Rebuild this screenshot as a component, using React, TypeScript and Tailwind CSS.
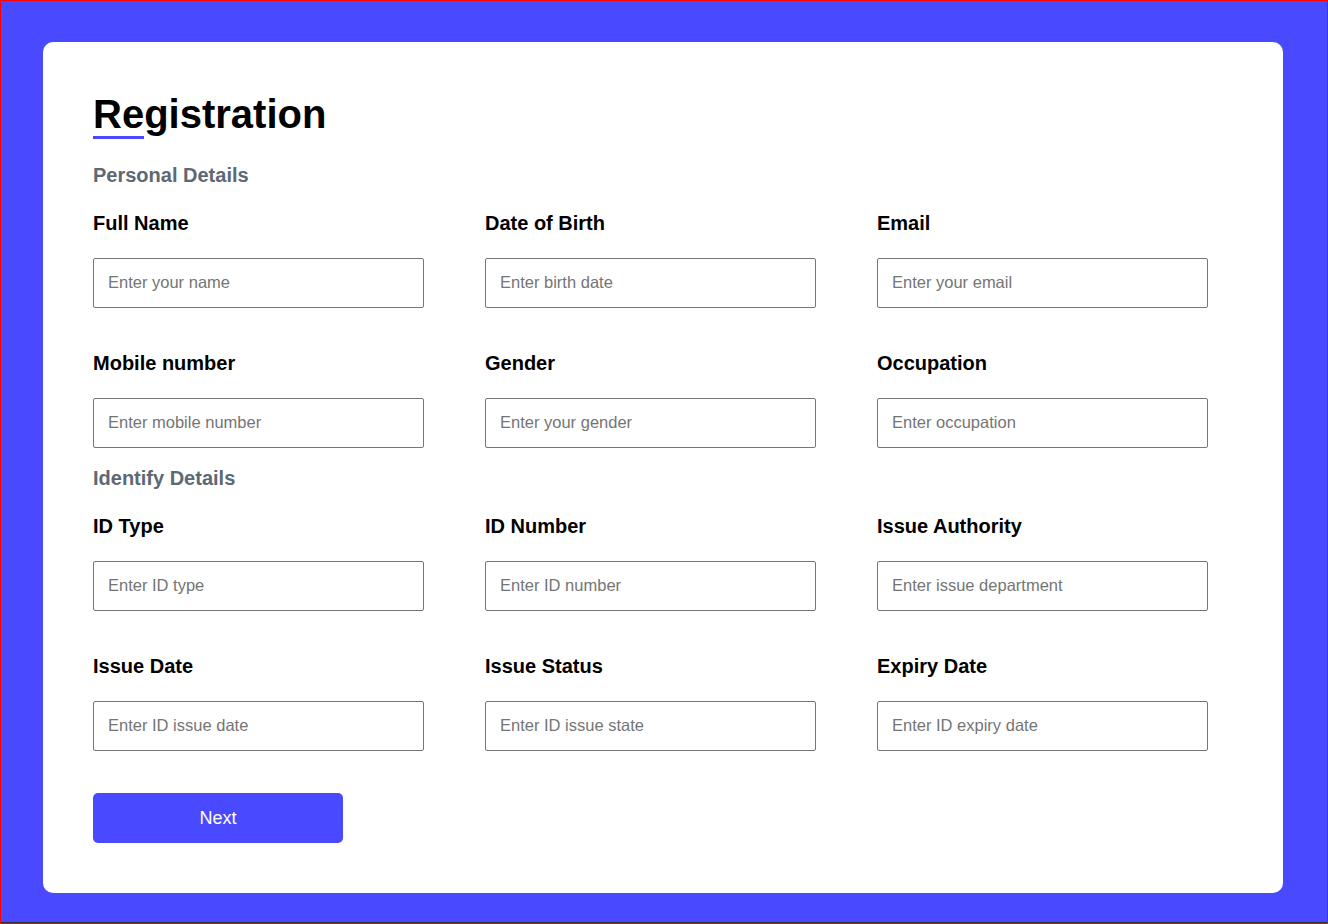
import React from "react";

const personal = [
  { label: "Full Name", ph: "Enter your name" },
  { label: "Date of Birth", ph: "Enter birth date" },
  { label: "Email", ph: "Enter your email" },
  { label: "Mobile number", ph: "Enter mobile number" },
  { label: "Gender", ph: "Enter your gender" },
  { label: "Occupation", ph: "Enter occupation" },
];

const identity = [
  { label: "ID Type", ph: "Enter ID type" },
  { label: "ID Number", ph: "Enter ID number" },
  { label: "Issue Authority", ph: "Enter issue department" },
  { label: "Issue Date", ph: "Enter ID issue date" },
  { label: "Issue Status", ph: "Enter ID issue state" },
  { label: "Expiry Date", ph: "Enter ID expiry date" },
];

function Field({ label, ph }: { label: string; ph: string }) {
  return (
    <div className="flex flex-col">
      <label className="text-[20px] leading-[23px] font-bold text-black">{label}</label>
      <input
        type="text"
        placeholder={ph}
        className="mt-[23px] h-[50px] w-[331px] rounded-[2px] border border-[#767676] bg-white pb-[2px] pl-[14px] text-[16.5px] text-black outline-none placeholder:text-[#757575]"
      />
    </div>
  );
}

function Grid({ items }: { items: { label: string; ph: string }[] }) {
  return (
    <div className="grid grid-cols-[repeat(3,331px)] gap-x-[61px] gap-y-[44px]">
      {items.map((f) => (
        <Field key={f.label} label={f.label} ph={f.ph} />
      ))}
    </div>
  );
}

export default function App() {
  return (
    <div
      className="h-[924px] w-[1328px] overflow-hidden border border-[#ff0000] bg-[#4949ff]"
      style={{ fontFamily: '"Liberation Sans", Arial, sans-serif' }}
    >
      <div className="flex h-[922px] flex-col">
        <div className="flex-1 pl-[42px] pt-[41px]">
          <div className="h-[851px] w-[1240px] rounded-[10px] bg-white pl-[50px] pt-[49px]">
            <div className="relative">
              <h1 className="text-[40px] leading-[46px] font-bold text-black">Registration</h1>
              <div className="absolute left-0 top-[45px] h-[3px] w-[51px] bg-[#4949ff]" />
            </div>
            <h2 className="mt-[27px] text-[20px] leading-[23px] font-bold text-[#5e6873]">Personal Details</h2>
            <div className="mt-[25px]">
              <Grid items={personal} />
            </div>
            <h2 className="mt-[19px] text-[20px] leading-[23px] font-bold text-[#5e6873]">Identify Details</h2>
            <div className="mt-[25px]">
              <Grid items={identity} />
            </div>
            <button
              type="button"
              className="mt-[42px] flex h-[50px] w-[250px] items-center justify-center rounded-[5px] bg-[#4949ff] text-[18px] text-white"
            >
              Next
            </button>
          </div>
        </div>
        <div className="h-px w-full bg-[#2b2b3a]" />
      </div>
    </div>
  );
}
